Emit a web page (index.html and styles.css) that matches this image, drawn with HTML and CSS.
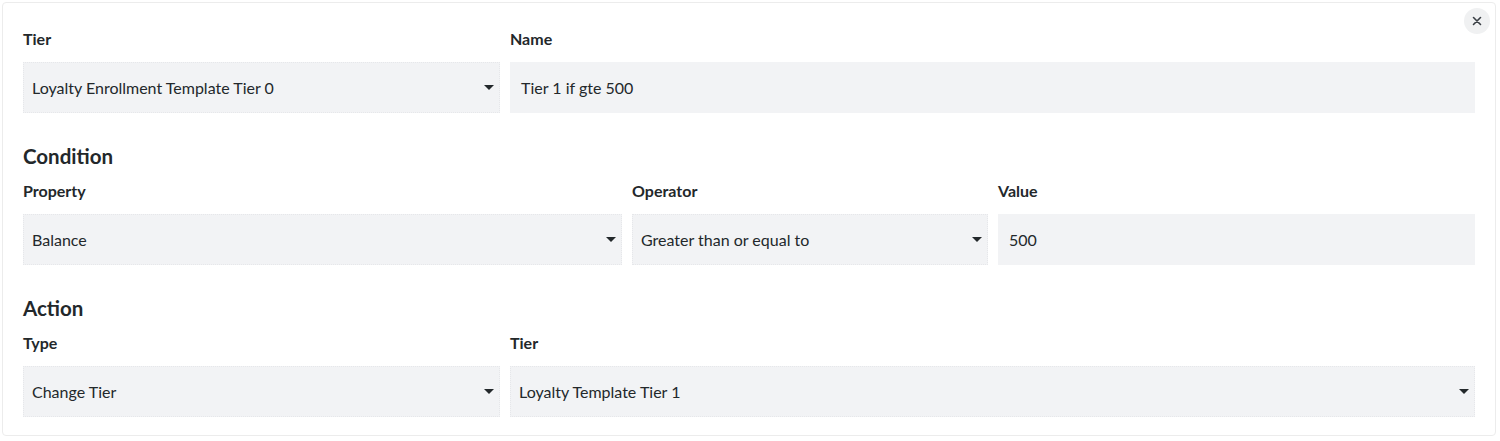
FILE: index.html
```html
<!DOCTYPE html>
<html>
<head>
<meta charset="utf-8">
<link rel="stylesheet" href="styles.css">
</head>
<body>
<div class="card">
  <button class="close" aria-label="Close">
    <svg width="10" height="10" viewBox="0 0 10 10"><path d="M1.5 1.5L8.5 8.5M8.5 1.5L1.5 8.5" stroke="#3a3f45" stroke-width="1.6" stroke-linecap="round"/></svg>
  </button>

  <div class="row row-a">
    <div class="field">
      <div class="label">Tier</div>
      <div class="control select">Loyalty Enrollment Template Tier 0<span class="caret"></span></div>
    </div>
    <div class="field">
      <div class="label">Name</div>
      <div class="control input">Tier 1 if gte 500</div>
    </div>
  </div>

  <h2 class="section">Condition</h2>
  <div class="row row-b">
    <div class="field">
      <div class="label">Property</div>
      <div class="control select">Balance<span class="caret"></span></div>
    </div>
    <div class="field">
      <div class="label">Operator</div>
      <div class="control select">Greater than or equal to<span class="caret"></span></div>
    </div>
    <div class="field">
      <div class="label">Value</div>
      <div class="control input">500</div>
    </div>
  </div>

  <h2 class="section">Action</h2>
  <div class="row row-a">
    <div class="field">
      <div class="label">Type</div>
      <div class="control select">Change Tier<span class="caret"></span></div>
    </div>
    <div class="field">
      <div class="label">Tier</div>
      <div class="control select">Loyalty Template Tier 1<span class="caret"></span></div>
    </div>
  </div>
</div>
</body>
</html>
```
FILE: styles.css
```css
html, body {
  margin: 0;
  padding: 0;
  background: #ffffff;
}
body {
  font-family: "Lato", "Open Sans", sans-serif;
  color: #23282b;
  padding: 2px 4px 0 2px;
}
.card {
  position: relative;
  border: 1px solid #ececec;
  border-radius: 4px;
  padding: 26px 20px 20px 20px;
  height: 434px;
  box-sizing: border-box;
}
.close {
  position: absolute;
  top: 5px;
  right: 5px;
  width: 26px;
  height: 26px;
  border-radius: 50%;
  border: none;
  background: #f0f1f2;
  padding: 0;
  display: flex;
  align-items: center;
  justify-content: center;
}
.row {
  display: grid;
  column-gap: 10px;
}
.row-a {
  grid-template-columns: 477fr 965fr;
}
.row-b {
  grid-template-columns: 599fr 356fr 477fr;
}
.field {
  display: flex;
  flex-direction: column;
  gap: 13px;
}
.label {
  font-size: 16px;
  font-weight: 700;
  line-height: 20px;
}
.control {
  position: relative;
  height: 51px;
  box-sizing: border-box;
  background: #f2f3f5;
  border: 1px dotted #e6e7ea;
  font-size: 16px;
  display: flex;
  align-items: center;
}
.select {
  padding: 0 30px 0 8px;
}
.input {
  padding: 0 12px 0 11px;
  border: none;
}
.caret {
  position: absolute;
  right: 5px;
  top: 50%;
  margin-top: -3px;
  width: 0;
  height: 0;
  border-left: 5px solid transparent;
  border-right: 5px solid transparent;
  border-top: 5px solid #23282b;
}
.section {
  margin: 31px 0 13px 0;
  font-size: 20.5px;
  font-weight: 700;
  line-height: 24px;
}
```
